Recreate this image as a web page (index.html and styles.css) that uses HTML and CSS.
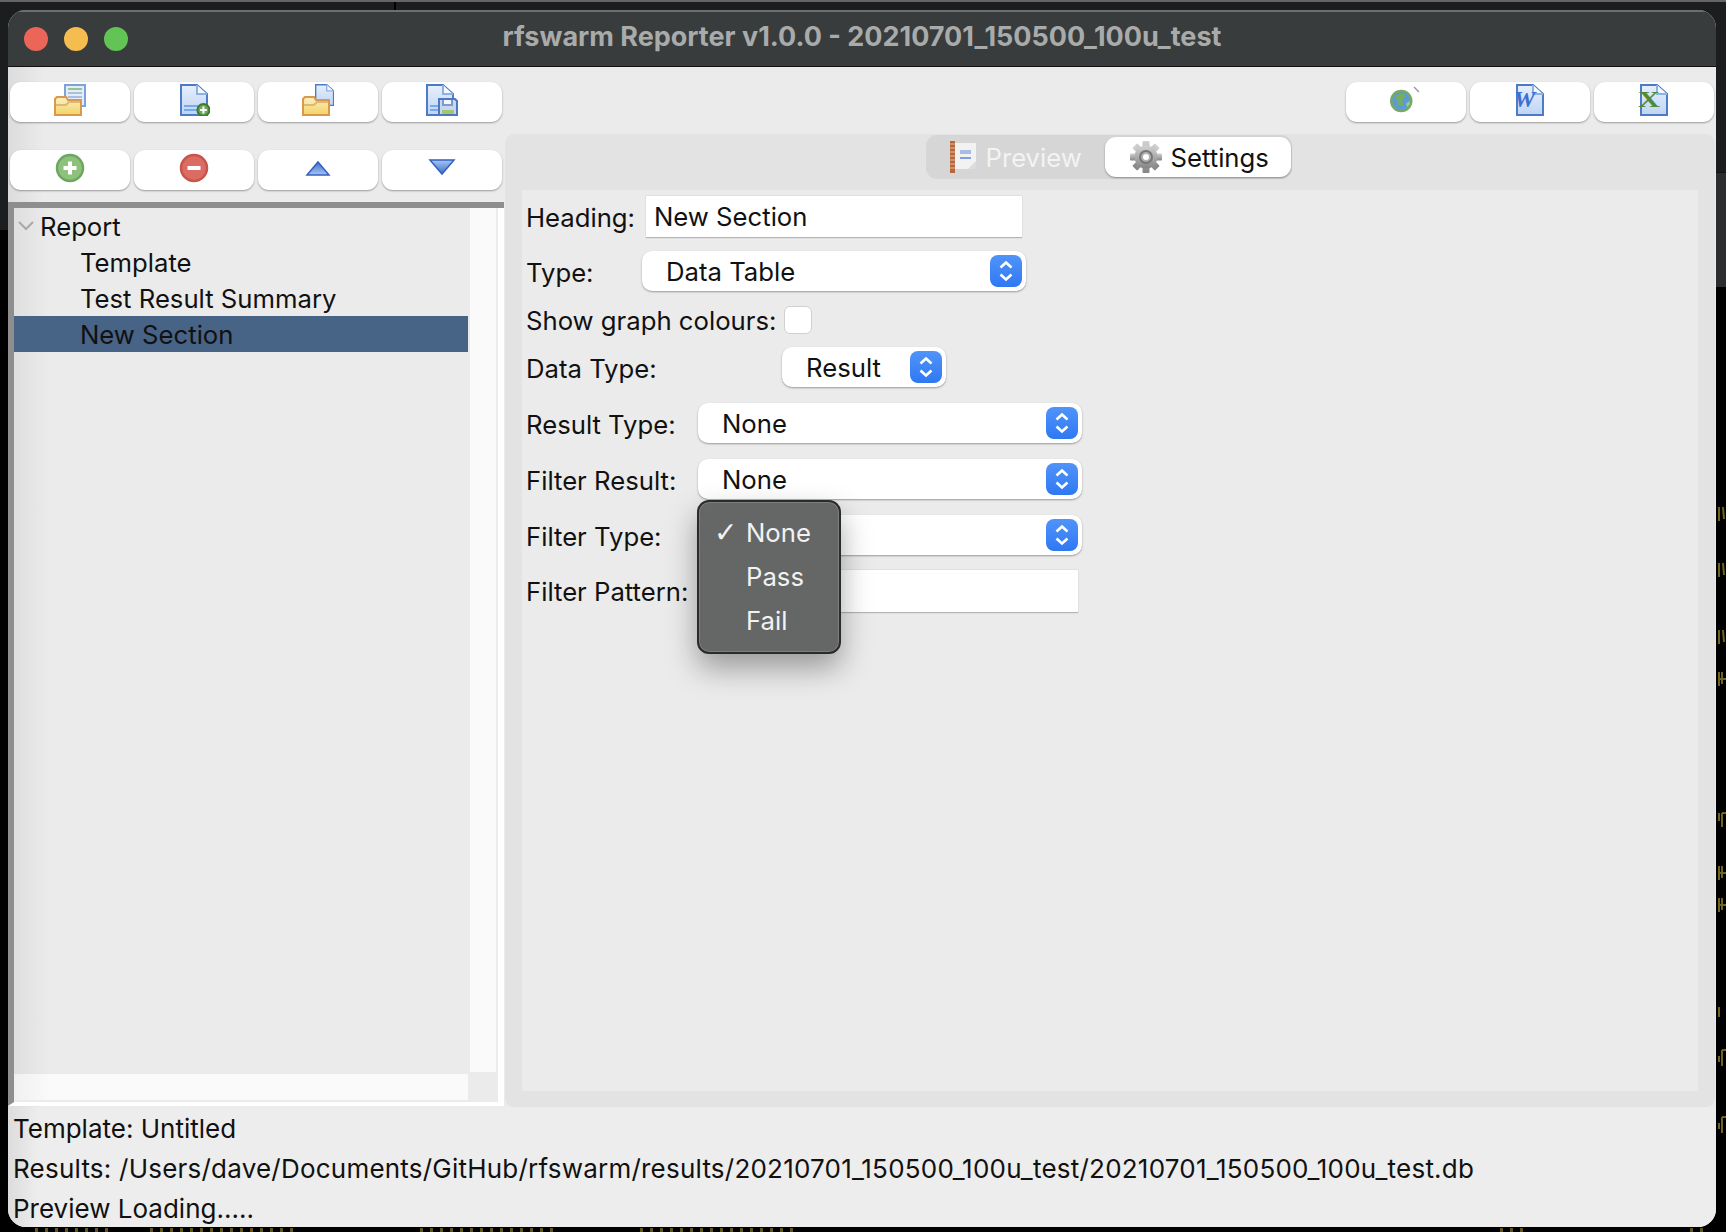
FILE: index.html
```html
<!DOCTYPE html>
<html>
<head>
  <title>rfswarm Reporter</title>
  <link rel="stylesheet" href="styles.css">
</head>
<body>
  <svg class="defs" width="0" height="0">
    <defs>
      <linearGradient id="page-fill" x1="0" y1="0" x2="0" y2="1"><stop offset="0" stop-color="#e6effc"/><stop offset="1" stop-color="#bfd4f4"/></linearGradient>
      <linearGradient id="folder-fill" x1="0" y1="0" x2="0" y2="1"><stop offset="0" stop-color="#fbf1c4"/><stop offset="1" stop-color="#f3d364"/></linearGradient>
      <linearGradient id="up-fill" x1="0" y1="0" x2="0" y2="1"><stop offset="0" stop-color="#3f70cc"/><stop offset="1" stop-color="#a9c4ef"/></linearGradient>
      <linearGradient id="down-fill" x1="0" y1="0" x2="0" y2="1"><stop offset="0" stop-color="#a9c4ef"/><stop offset="1" stop-color="#3f70cc"/></linearGradient>
      <linearGradient id="step-fill" x1="0" y1="0" x2="0" y2="1"><stop offset="0" stop-color="#5094fa"/><stop offset="1" stop-color="#2f78f2"/></linearGradient>
      <linearGradient id="gear-fill" x1="0" y1="0" x2="0" y2="1"><stop offset="0" stop-color="#d2d2d2"/><stop offset="1" stop-color="#858585"/></linearGradient>
      <symbol id="page" viewBox="0 0 16 16" preserveAspectRatio="none">
        <path d="M.5.5H8.500L13.500 5V15.500H.5Z" fill="url(#page-fill)" stroke="#4c7cc9"/>
        <path d="M8.500.5V5H13.500" fill="#f4f8fe" stroke="#8fb0e3"/>
        <path d="M2 11H9M2 13H9" stroke="#79a9ea"/>
      </symbol>
      <symbol id="page-blank" viewBox="0 0 16 16" preserveAspectRatio="none">
        <path d="M.5.5H8.500L13.500 5V15.500H.5Z" fill="url(#page-fill)" stroke="#4c7cc9"/>
        <path d="M8.500.5V5H13.500" fill="#f4f8fe" stroke="#8fb0e3"/>
      </symbol>
      <symbol id="folder" viewBox="0 0 16 16">
        <path d="M.5 15.500V7.500L1.500 6.500H6L7 8H13.500V15.500Z" fill="url(#folder-fill)" stroke="#d8994a"/>
        <path d="M1 10.500H6L7.500 9H13" fill="none" stroke="#e2b676"/>
      </symbol>
      <symbol id="stepper" viewBox="0 0 32 32">
        <rect width="32" height="32" rx="8" fill="url(#step-fill)"/>
        <path d="M10.500 12.500 16 7.500 21.500 12.500M10.500 19.500 16 24.500 21.500 19.500" fill="none" stroke="#fff" stroke-width="2.600"/>
      </symbol>
    </defs>
  </svg>

  <!-- the other windows behind this one -->
  <div class="backdrop"></div>
  <div class="backdrop-right"></div>
  <svg class="strays" viewBox="0 0 1726 1232">
    <path d="M395 2V10" stroke="#000" stroke-width="2"/>
    <path d="M1719 507v14M1723 507l1 12M1719 563v14M1723 563l1 12M1719 630v14M1723 630l1 12M1719 672v14M1722 672v12M1719 679h7M1719 813v8M1722 813v14M1722 813h4M1719 866v14M1722 866v12M1719 873h7M1719 898v14M1722 898v12M1719 905h7M1719 1007v10M1719 1056v6M1722 1050v16M1722 1050h4M1719 1123v6M1722 1117v16M1722 1117h4" fill="none" stroke="#6e6420" stroke-width="2"/>
    <path d="M35 1230H110M150 1230H300M420 1230H560M640 1230H800M1500 1230H1530M1690 1230H1710" fill="none" stroke="#5e5522" stroke-width="4" stroke-dasharray="3 7"/>
  </svg>

  <div class="window">
    <div class="titlebar">
      <div class="lights">
        <span class="light red"></span>
        <span class="light yellow"></span>
        <span class="light green"></span>
      </div>
      <div class="title">rfswarm Reporter v1.0.0 - 20210701_150500_100u_test</div>
    </div>

    <div class="content">
      <div class="toolbar">
        <button class="tool">
          <svg class="icon" viewBox="0 0 16 16">
            <path d="M5.500.5H15.500V11H5.500Z" fill="#e4edfb" stroke="#7fa2dc"/>
            <path d="M7 2.500H14" stroke="#97c583"/>
            <path d="M7 4.500H14M7 6.500H14M7 8.500H14" stroke="#a9bfe2"/>
            <use href="#folder" width="16" height="16"/>
          </svg>
        </button>
        <button class="tool">
          <svg class="icon" viewBox="0 0 16 16">
            <use href="#page" x="1" y="0" width="16" height="16"/>
            <circle cx="12.700" cy="13" r="3" fill="#6ea65a" stroke="#3f7b2e"/>
            <path d="M11 13H14.400M12.700 11.300V14.700" stroke="#fff"/>
          </svg>
        </button>
        <button class="tool">
          <svg class="icon" viewBox="0 0 16 16">
            <use href="#page-blank" x="6.500" y="0" width="11" height="11"/>
            <use href="#folder" width="16" height="16"/>
          </svg>
        </button>
        <button class="tool">
          <svg class="icon" viewBox="0 0 16 16">
            <use href="#page" x="0" y="0" width="16" height="16"/>
            <path d="M6.500 7.500H14.500L15.500 8.500V15.500H6.500Z" fill="#c7d7ef" stroke="#4c78bf"/>
            <path d="M8.500 8V10.500H13V8" fill="#f4f7fc" stroke="#7d9bcc"/>
            <path d="M8 14H14" stroke="#a3c76c" stroke-width="2"/>
          </svg>
        </button>
      </div>

      <div class="toolbar toolbar-right">
        <button class="tool">
          <svg class="icon" viewBox="0 0 16 16">
            <path d="M12 1.500 14.500 4" stroke="#9a9a9a" stroke-width=".7"/>
            <circle cx="5.600" cy="8.500" r="5" fill="#5b9bd8" stroke="#78a868" stroke-width="1.300"/>
            <path d="M2.500 6.500 5.500 4.500 8 6 6 8.500 7 11 4.500 11 3.500 8.500Z" fill="#76ad63"/>
            <path d="M8 10 9.500 8.500 10 10 8.500 11.500Z" fill="#9ccb8a"/>
          </svg>
        </button>
        <button class="tool">
          <svg class="icon" viewBox="0 0 16 16">
            <use href="#page-blank" x="1" y="0" width="16" height="16"/>
            <text class="icon-letter word" x="0" y="11.500">W</text>
          </svg>
        </button>
        <button class="tool">
          <svg class="icon" viewBox="0 0 16 16">
            <use href="#page-blank" x="1" y="0" width="16" height="16"/>
            <text class="icon-letter excel" x="0" y="11.500" textLength="11" lengthAdjust="spacingAndGlyphs">X</text>
          </svg>
        </button>
      </div>

      <div class="left-pane">
        <div class="toolbar toolbar-second">
          <button class="tool">
            <svg class="icon" viewBox="0 0 32 32">
              <circle cx="16" cy="16" r="13" fill="#8ec27c" stroke="#6fa65f" stroke-width="2.500"/>
              <path d="M9.500 16H22.500M16 9.500V22.500" stroke="#fff" stroke-width="4"/>
            </svg>
          </button>
          <button class="tool">
            <svg class="icon" viewBox="0 0 32 32">
              <circle cx="16" cy="16" r="13" fill="#db6c64" stroke="#c9544c" stroke-width="2.500"/>
              <path d="M9.500 16H22.500" stroke="#fff" stroke-width="4"/>
            </svg>
          </button>
          <button class="tool">
            <svg class="icon" viewBox="0 0 32 32">
              <path d="M16 10 27 23H5Z" fill="url(#up-fill)" stroke="#3160c4" stroke-width="1.500"/>
            </svg>
          </button>
          <button class="tool">
            <svg class="icon" viewBox="0 0 32 32">
              <path d="M4 8H28L16 22Z" fill="url(#down-fill)" stroke="#3160c4" stroke-width="1.500"/>
            </svg>
          </button>
        </div>
        <div class="sash"></div>
        <div class="tree-frame">
          <div class="tree">
            <div class="tree-row root">
              <svg class="chevron" viewBox="0 0 16 10"><path d="M1 1 8 8 15 1" fill="none" stroke="#a8a8a8" stroke-width="2"/></svg>
              Report
            </div>
            <div class="tree-row">Template</div>
            <div class="tree-row">Test Result Summary</div>
            <div class="tree-row selected">New Section</div>
          </div>
          <div class="vscroll"></div>
          <div class="hscroll"></div>
          <div class="corner"></div>
        </div>
      </div>

      <div class="notebook">
        <div class="tabs-bar">
          <div class="tabs">
            <div class="tab tab-preview">
              <svg class="tab-icon-preview" viewBox="3 0 26 32">
                <path d="M3 0H8V32H3Z" fill="#b8663c"/>
                <path d="M3 3H8M3 7H8M3 11H8M3 15H8M3 19H8M3 23H8M3 27H8" stroke="#e4b898" stroke-width="1"/>
                <path d="M8 2H29V28H8Z" fill="#f2f2f2"/>
                <path d="M13 9H24V13H13Z" fill="#a8bde6"/>
                <path d="M13 16H24V18H13Z" fill="#7f9fe0"/>
                <path d="M21 28 29 20V28Z" fill="#dcdcdc"/>
              </svg>
              Preview
            </div>
            <div class="tab active">
              <svg class="tab-icon" viewBox="0 0 32 32">
                <g fill="url(#gear-fill)">
                  <rect x="12.500" y="0" width="7" height="32" rx="1"/>
                  <rect x="0" y="12.500" width="32" height="7" rx="1"/>
                  <rect x="12.500" y="0" width="7" height="32" rx="1" transform="rotate(45 16 16)"/>
                  <rect x="12.500" y="0" width="7" height="32" rx="1" transform="rotate(-45 16 16)"/>
                  <circle cx="16" cy="16" r="11.500"/>
                </g>
                <circle cx="16" cy="16" r="6" fill="#b0b0b0" stroke="#777" stroke-width="2"/>
                <circle cx="16" cy="16" r="3" fill="#fff"/>
              </svg>
              Settings
            </div>
          </div>
        </div>

        <div class="settings">
          <div class="row row-tall">
            <label class="label label-heading">Heading:</label>
            <div class="entry entry-heading">New Section</div>
          </div>
          <div class="row">
            <label class="label label-type">Type:</label>
            <div class="select select-type">Data Table<svg class="stepper"><use href="#stepper"/></svg></div>
          </div>
          <div class="row row-check">
            <label class="label label-graph">Show graph colours:</label>
            <div class="checkbox"></div>
          </div>
          <div class="row">
            <label class="label label-data">Data Type:</label>
            <div class="select select-data">Result<svg class="stepper"><use href="#stepper"/></svg></div>
          </div>
          <div class="row">
            <label class="label label-filter">Result Type:</label>
            <div class="select select-wide">None<svg class="stepper"><use href="#stepper"/></svg></div>
          </div>
          <div class="row">
            <label class="label label-filter">Filter Result:</label>
            <div class="select select-wide">None<svg class="stepper"><use href="#stepper"/></svg></div>
          </div>
          <div class="row">
            <label class="label label-filter">Filter Type:</label>
            <div class="select select-wide"><svg class="stepper"><use href="#stepper"/></svg></div>
          </div>
          <div class="row row-tall">
            <label class="label label-filter label-flat">Filter Pattern:</label>
            <div class="entry entry-pattern"></div>
          </div>
        </div>

        <div class="menu">
          <div class="menu-item"><span class="check">✓</span>None</div>
          <div class="menu-item">Pass</div>
          <div class="menu-item">Fail</div>
        </div>
      </div>
    </div>

    <div class="status">
      <div class="status-line">Template: Untitled</div>
      <div class="status-line status-path">Results: /Users/dave/Documents/GitHub/rfswarm/results/20210701_150500_100u_test/20210701_150500_100u_test.db</div>
      <div class="status-line">Preview Loading.....</div>
    </div>
  </div>
</body>
</html>
```

FILE: styles.css
```css
html, body {
  margin: 0;
  padding: 0;
  background: #000;
}
body {
  width: 1726px;
  height: 1232px;
  overflow: hidden;
  position: relative;
  font-family: Inter, "Liberation Sans", sans-serif;
  font-size: 25.7px;
  color: #111;
}
.defs {
  position: absolute;
}

.backdrop {
  position: absolute;
  top: 0;
  left: 0;
  right: 0;
  height: 230px;
  background: #1b1d1e;
  border-top: 2px solid #666;
  box-sizing: border-box;
}
.backdrop-right {
  position: absolute;
  top: 172px;
  left: 1716px;
  right: 0;
  height: 114px;
  background: #2b2d2e;
  border-top: 1px solid #111;
}
.strays {
  position: absolute;
  top: 0;
  left: 0;
  width: 1726px;
  height: 1232px;
}

.window {
  position: absolute;
  top: 10px;
  left: 8px;
  width: 1708px;
  height: 1217px;
  border-radius: 18px;
  overflow: hidden;
  background: linear-gradient(90deg, #dcdcdc, #ebebeb 36px);
  display: flex;
  flex-direction: column;
}

.titlebar {
  height: 57px;
  flex: none;
  box-sizing: border-box;
  background: #383c3d;
  border-top: 2px solid #6d7071;
  border-bottom: 1px solid #111;
  display: flex;
  align-items: center;
  position: relative;
}
.lights {
  display: flex;
  gap: 16px;
  margin-left: 16px;
}
.light {
  width: 24px;
  height: 24px;
  border-radius: 50%;
}
.red { background: #ec6559; }
.yellow { background: #f5bd4f; }
.green { background: #61c454; }
.title {
  position: absolute;
  left: 0;
  right: 0;
  top: 8px;
  text-align: center;
  font-weight: 700;
  font-size: 27px;
  color: #a9abab;
}

.content {
  flex: none;
  height: 1040px;
  display: grid;
  grid-template-columns: 496px 1fr;
  grid-template-rows: 67px 973px;
}

.toolbar {
  display: flex;
  gap: 4px;
  padding: 15px 2px 0;
}
.toolbar-right {
  justify-content: flex-end;
}
.toolbar-second {
  padding-top: 16px;
}
.tool {
  width: 120px;
  height: 40px;
  padding: 0;
  border: none;
  border-radius: 11px;
  background: #fff;
  box-shadow: 0 1px 2px rgba(0, 0, 0, 0.35);
  display: flex;
  justify-content: center;
  align-items: flex-start;
}
.icon {
  width: 32px;
  height: 32px;
  margin-top: 2px;
}
.icon-letter {
  font-family: "Liberation Serif", serif;
  font-weight: 700;
  font-style: italic;
  font-size: 12px;
}
.word { fill: #3e6fd0; }
.excel {
  fill: #4f8a3a;
  font-style: normal;
}

.left-pane {
  display: flex;
  flex-direction: column;
}
.sash {
  height: 6px;
  margin-top: 12px;
  background: #8e8e8e;
  flex: none;
}
.tree-frame {
  flex: none;
  height: 898px;
  box-sizing: border-box;
  border-left: 6px solid #8e8e8e;
  border-right: 6px solid #fff;
  border-bottom: 4px solid #fff;
  display: grid;
  grid-template-columns: 454px 30px;
  grid-template-rows: 866px 28px;
  background: #ebebeb;
}
.tree {
  background: linear-gradient(90deg, #dfdfdf, #ebebeb 36px);
}
.tree-row {
  height: 36px;
  line-height: 38px;
  padding-left: 66px;
  white-space: nowrap;
}
.tree-row.root {
  padding-left: 26px;
  position: relative;
}
.chevron {
  position: absolute;
  left: 4px;
  top: 13px;
  width: 16px;
  height: 10px;
}
.tree-row.selected {
  background: #476386;
}
.vscroll {
  margin: 0 2px 2px;
  background: #fafafa;
}
.hscroll {
  margin-bottom: 2px;
  background: linear-gradient(90deg, #f0f0f0, #fafafa 36px);
}

.notebook {
  margin: 0 1px 0 1px;
  height: 973px;
  background: #e3e3e3;
  border-radius: 9px;
  position: relative;
  display: flex;
  flex-direction: column;
}
.tabs-bar {
  height: 56px;
  flex: none;
  display: flex;
  justify-content: center;
  align-items: flex-start;
}
.tabs {
  width: 366px;
  height: 44px;
  box-sizing: border-box;
  margin-left: -3px;
  margin-top: 1px;
  background: #d6d6d6;
  border-radius: 11px;
  display: flex;
  align-items: center;
  justify-content: space-between;
  padding-right: 1px;
}
.tab {
  height: 40px;
  display: flex;
  align-items: center;
  gap: 10px;
  padding-left: 24px;
  color: #f3f3f3;
}
.tab.active {
  width: 186px;
  box-sizing: border-box;
  padding-left: 25px;
  gap: 9px;
  background: #fff;
  border-radius: 11px;
  box-shadow: 0 1px 2px rgba(0, 0, 0, 0.35);
  color: #111;
}
.tab-icon {
  width: 32px;
  height: 32px;
  flex: none;
}
.tab-icon-preview {
  width: 26px;
  height: 32px;
  flex: none;
}

.settings {
  margin: 0 17px;
  height: 901px;
  box-sizing: border-box;
  padding: 6px 0 0 4px;
  background: #ebebeb;
  display: grid;
  grid-template-rows: 55px 56px 40px 56px 56px 56px 55px 43px;
  align-content: start;
}
.row {
  display: flex;
  align-items: center;
  height: 40px;
}
.row-tall {
  height: 42px;
}
.row:last-child {
  height: 43px;
}
.row-check {
  height: 28px;
  margin-top: -1px;
}
.label {
  white-space: nowrap;
  padding-top: 2px;
}
.label-heading {
  width: 120px;
  padding-top: 1px;
}
.label-type { width: 116px; }
.label-data { width: 256px; }
.label-filter { width: 172px; }
.label-flat { padding-top: 0; }
.label-graph {
  width: 258px;
  padding-top: 1px;
}
.entry {
  box-sizing: border-box;
  height: 100%;
  line-height: 42px;
  background: #fff;
  padding-left: 8px;
  border-bottom: 1px solid #b5b5b5;
  box-shadow: 0 0 1px rgba(0, 0, 0, 0.25);
}
.entry-heading {
  width: 376px;
}
.entry-pattern {
  width: 380px;
}
.select {
  box-sizing: border-box;
  height: 40px;
  padding-left: 24px;
  background: #fff;
  border-radius: 10px;
  box-shadow: 0 1px 2px rgba(0, 0, 0, 0.35);
  display: flex;
  align-items: center;
  justify-content: space-between;
  padding-right: 4px;
}
.select-type { width: 384px; }
.select-data { width: 164px; }
.select-wide { width: 384px; }
.stepper {
  width: 32px;
  height: 32px;
  flex: none;
  margin-left: auto;
}
.checkbox {
  box-sizing: border-box;
  width: 28px;
  height: 28px;
  background: #fff;
  border: 1px solid #d0d0d0;
  border-radius: 6px;
}

.menu {
  position: absolute;
  left: 192px;
  top: 366px;
  width: 144px;
  height: 154px;
  box-sizing: border-box;
  padding-top: 9px;
  background: #656766;
  border: 2px solid #2a2b2b;
  border-radius: 12px;
  box-shadow: inset 0 0 0 1px #7d7f7e, 0 14px 30px rgba(0, 0, 0, 0.35);
  color: #f2f2f2;
}
.menu-item {
  height: 44px;
  line-height: 44px;
  padding-left: 47px;
  position: relative;
}
.check {
  position: absolute;
  left: 15px;
  font-family: "DejaVu Sans", sans-serif;
  font-weight: 700;
  font-size: 28px;
}

.status {
  flex: none;
  height: 120px;
  background: linear-gradient(90deg, #dcdcdc, #ededed 30px);
  padding: 2px 0 0 5px;
  box-sizing: border-box;
  font-size: 26px;
}
.status-line {
  height: 40px;
  line-height: 40px;
  white-space: nowrap;
}
.status-path {
  letter-spacing: 0.22px;
}
```
